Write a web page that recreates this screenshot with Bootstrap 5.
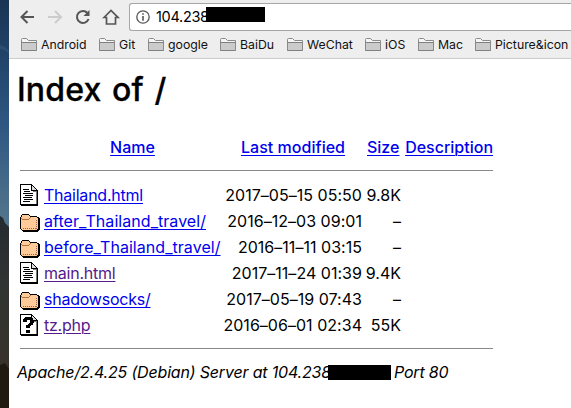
<!DOCTYPE html>
<html lang="en">
<head>
<meta charset="utf-8">
<meta name="viewport" content="width=device-width, initial-scale=1">
<title>Index of /</title>
<link href="https://cdn.jsdelivr.net/npm/bootstrap@5.3.0/dist/css/bootstrap.min.css" rel="stylesheet">
<style>
body{font-family:Inter,"Liberation Sans",sans-serif;font-size:16px;line-height:26px;color:#000;overflow:hidden;height:408px;background:#fff}
.desk{width:9px;height:408px;flex:none}
.chrome{height:59px;background:#eee;border-bottom:1px solid #ccc}
.tools{height:31px;padding:3px 0 0 10px}
.tools svg{flex:none;display:block}
.address{height:28px;margin-left:8px;border:1px solid #a6a6a6;border-right:0;border-radius:3px 0 0 3px;background:#fff;padding-left:6px;font-size:14.5px;letter-spacing:-.3px}
.address svg{margin-right:6px}
.redact{background:#000;flex:none}
.address .redact{width:59px;height:15px;margin:-5px 0 0 -3px}
.marks{height:27px;padding-left:12px;font-size:12.3px;line-height:27px;white-space:nowrap}
.marks a{color:#111;text-decoration:none;display:flex;align-items:center;flex:none}
.marks svg{margin-right:4px}
.page{padding:0 0 0 8px}
.page h1{font-size:32px;font-weight:500;line-height:40px;margin:11px 0 0;letter-spacing:.15px;word-spacing:2px;-webkit-text-stroke:.3px #000}
.listing{width:473px;margin:24px 0 0 3px;table-layout:fixed;border-collapse:collapse;white-space:nowrap}
.listing th,.listing td{padding:0;height:26px;line-height:26px}
.listing th{text-align:center;font-weight:500}
.listing a{color:#00e;text-decoration:underline;text-decoration-thickness:1px;text-underline-offset:2px}
.listing a.seen{color:#551a8b}
.listing svg{display:block}
.listing svg.folder{margin-top:3px}
.listing td a{letter-spacing:-.23px}
.listing td a.wide{letter-spacing:.05px}
.listing .date{text-align:right;letter-spacing:.03px}
.listing th.date{text-align:center;padding-left:3px}
.listing .size{text-align:right}
.listing th.size{padding-left:5px;text-align:left}
.listing .rule{height:22px}
.listing tr:first-child .rule{padding-bottom:1px}
.listing tr:last-child .rule{padding-bottom:2px}
.rule div{height:1px;background:#888}
.server{font-style:italic;margin-top:-1px;white-space:nowrap;letter-spacing:-.18px}
.server .redact{width:63px;height:15px;margin:0 3px 0 -3px}
</style>
<script src="https://cdn.jsdelivr.net/npm/bootstrap@5.3.0/dist/js/bootstrap.bundle.min.js"></script>
</head>
<body>
<svg width="0" height="0" class="position-absolute">
<defs>
<symbol id="mark" viewBox="0 0 16 13"><path d="M.5 12.5V1.5Q.5.5 1.5.5H5.5L7.5 2.5H15.5V12.5Z" fill="#f5f5f5" stroke="#8a8a8a"/><path d="M1 4.5H15V12H1Z" fill="#cbcbcb"/><path d="M.5 4.5H15.5M.5 12.5H15.5" stroke="#808080"/></symbol>
<symbol id="paper" viewBox="0 0 18 22"><path d="M0 0H12V1H13V2H14V3H15V4H16V5H17V6H18V22H1V21H0Z" fill="#000"/><path d="M1 1H11V7H16V20H1Z" fill="#fff"/><path d="M12 2H13V3H14V4H15V5H16V6H12Z" fill="#ddd"/><path d="M13 7H17V8H13ZM16 8H17V20H16Z" fill="#777"/></symbol>
<symbol id="doc" viewBox="0 0 18 22"><use href="#paper" width="18" height="22"/><path d="M3 5.5H9M4 7.5H10M3 9.5H13M5 11.5H13M3 13.5H12M4 15.5H13M3 17.5H10" stroke="#000"/></symbol>
<symbol id="unknown" viewBox="0 0 18 22"><use href="#paper" width="18" height="22"/><path d="M5 3H11V4H13V6H14V9H13V11H11V12H10V14H6V11H8V10H9V9H10V6H7V8H3V5H4V4H5ZM6 16H10V19H6Z" fill="#000"/></symbol>
<symbol id="dir" viewBox="0 0 20 18"><path d="M2 0H9V1H10V2H10H17V3H19V4H20V16H19V17H18V18H3V17H2V16H1V15H0V3H1V1H2Z" fill="#000"/><path d="M2 1H9V2H10V3H17V4H18V15H17V16H2V15H1V3H2Z" fill="#fc9"/><path d="M1 4H2V5H9V4H10V3H11V4H10V5H9V6H2V5H1Z" fill="#b5713f"/><path d="M3 14.5H16" stroke="#965" stroke-dasharray="1 1"/><path d="M16.5 6V15" stroke="#965" stroke-dasharray="1 1"/></symbol>
</defs>
</svg>
<div class="d-flex">
<svg class="desk" viewBox="0 0 9 408" preserveAspectRatio="none" aria-hidden="true">
<defs><linearGradient id="sky" gradientUnits="userSpaceOnUse" x1="0" y1="0" x2="0" y2="408"><stop stop-color="#193454"/><stop offset=".3" stop-color="#2d5681"/><stop offset=".53" stop-color="#51748c"/></linearGradient><linearGradient id="hill" x2="0" y2="1"><stop stop-color="#252a30"/><stop offset=".35" stop-color="#303432"/><stop offset=".78" stop-color="#38332b"/><stop offset=".85" stop-color="#241c12"/><stop offset="1" stop-color="#20180f"/></linearGradient></defs>
<path d="M0 0H9V408H0Z" fill="url(#sky)"/><path d="M0 216L3 218L5 223L9 227V408H0Z" fill="url(#hill)"/><path d="M0 365L5 363L9 369V408H0Z" fill="#211a10"/><path d="M0 45L5 47L9 51V53L4 50L0 49Z" fill="#345778" opacity=".6"/>
</svg>
<div class="flex-grow-1 overflow-hidden">
<header class="chrome">
<div class="tools d-flex align-items-center">
<svg width="102" height="20" viewBox="0 0 102 20" fill="none" stroke="#555" stroke-width="2"><path d="M15 10H3M8.5 4L2.5 10L8.5 16"/><path d="M29 10H42M36 4L42 10L36 16" stroke="#ccc"/><path d="M68.5 6A6 6 0 1 0 69.6 12"/><path d="M70.5 3V9H64.5Z" fill="#555" stroke="none"/><path d="M85 10.5L92 3.5L99 10.5H96.5V17H87.5V10.5Z" stroke-width="1.7"/></svg>
<div class="address d-flex align-items-center flex-grow-1"><svg width="14" height="14" viewBox="0 0 14 14"><circle cx="7" cy="7" r="6.2" fill="none" stroke="#555" stroke-width="1.3"/><path d="M6.2 3.2H7.8V4.8H6.2ZM6.2 6H7.8V10.8H6.2Z" fill="#555"/></svg>104.238<span class="redact"></span></div>
</div>
<nav class="marks d-flex">
<a href="#" style="width:78px"><svg width="16" height="13"><use href="#mark"/></svg>Android</a>
<a href="#" style="width:49px"><svg width="16" height="13"><use href="#mark"/></svg>Git</a>
<a href="#" style="width:72px"><svg width="16" height="13"><use href="#mark"/></svg>google</a>
<a href="#" style="width:67px"><svg width="16" height="13"><use href="#mark"/></svg>BaiDu</a>
<a href="#" style="width:78px"><svg width="16" height="13"><use href="#mark"/></svg>WeChat</a>
<a href="#" style="width:53px"><svg width="16" height="13"><use href="#mark"/></svg>iOS</a>
<a href="#" style="width:57px"><svg width="16" height="13"><use href="#mark"/></svg>Mac</a>
<a href="#"><svg width="16" height="13"><use href="#mark"/></svg>Picture&amp;icon</a>
</nav>
</header>
<main class="page">
<h1>Index of /</h1>
<table class="listing">
<colgroup><col style="width:24px"><col style="width:177px"><col style="width:141px"><col style="width:39px"><col style="width:92px"></colgroup>
<thead><tr><th></th><th><a href="#">Name</a></th><th class="date"><a href="#">Last modified</a></th><th class="size"><a href="#">Size</a></th><th class="text-end"><a href="#">Description</a></th></tr></thead>
<tbody>
<tr><td colspan="5" class="rule"><div></div></td></tr>
<tr><td><svg width="18" height="22" shape-rendering="crispEdges"><use href="#doc"/></svg></td><td><a href="#">Thailand.html</a></td><td class="date">2017–05–15 05:50</td><td class="size">9.8K</td><td></td></tr>
<tr><td><svg class="folder" width="20" height="18" shape-rendering="crispEdges"><use href="#dir"/></svg></td><td><a class="wide" href="#">after_Thailand_travel/</a></td><td class="date">2016–12–03 09:01</td><td class="size">–</td><td></td></tr>
<tr><td><svg class="folder" width="20" height="18" shape-rendering="crispEdges"><use href="#dir"/></svg></td><td><a class="wide" href="#">before_Thailand_travel/</a></td><td class="date">2016–11–11 03:15</td><td class="size">–</td><td></td></tr>
<tr><td><svg width="18" height="22" shape-rendering="crispEdges"><use href="#doc"/></svg></td><td><a class="seen" href="#">main.html</a></td><td class="date">2017–11–24 01:39</td><td class="size">9.4K</td><td></td></tr>
<tr><td><svg class="folder" width="20" height="18" shape-rendering="crispEdges"><use href="#dir"/></svg></td><td><a href="#">shadowsocks/</a></td><td class="date">2017–05–19 07:43</td><td class="size">–</td><td></td></tr>
<tr><td><svg width="18" height="22" shape-rendering="crispEdges"><use href="#unknown"/></svg></td><td><a class="seen" href="#">tz.php</a></td><td class="date">2016–06–01 02:34</td><td class="size">55K</td><td></td></tr>
<tr><td colspan="5" class="rule"><div></div></td></tr>
</tbody>
</table>
<footer class="server d-flex align-items-center">Apache/2.4.25 (Debian) Server at 104.238<span class="redact"></span>Port 80</footer>
</main>
</div>
</div>
</body>
</html>
